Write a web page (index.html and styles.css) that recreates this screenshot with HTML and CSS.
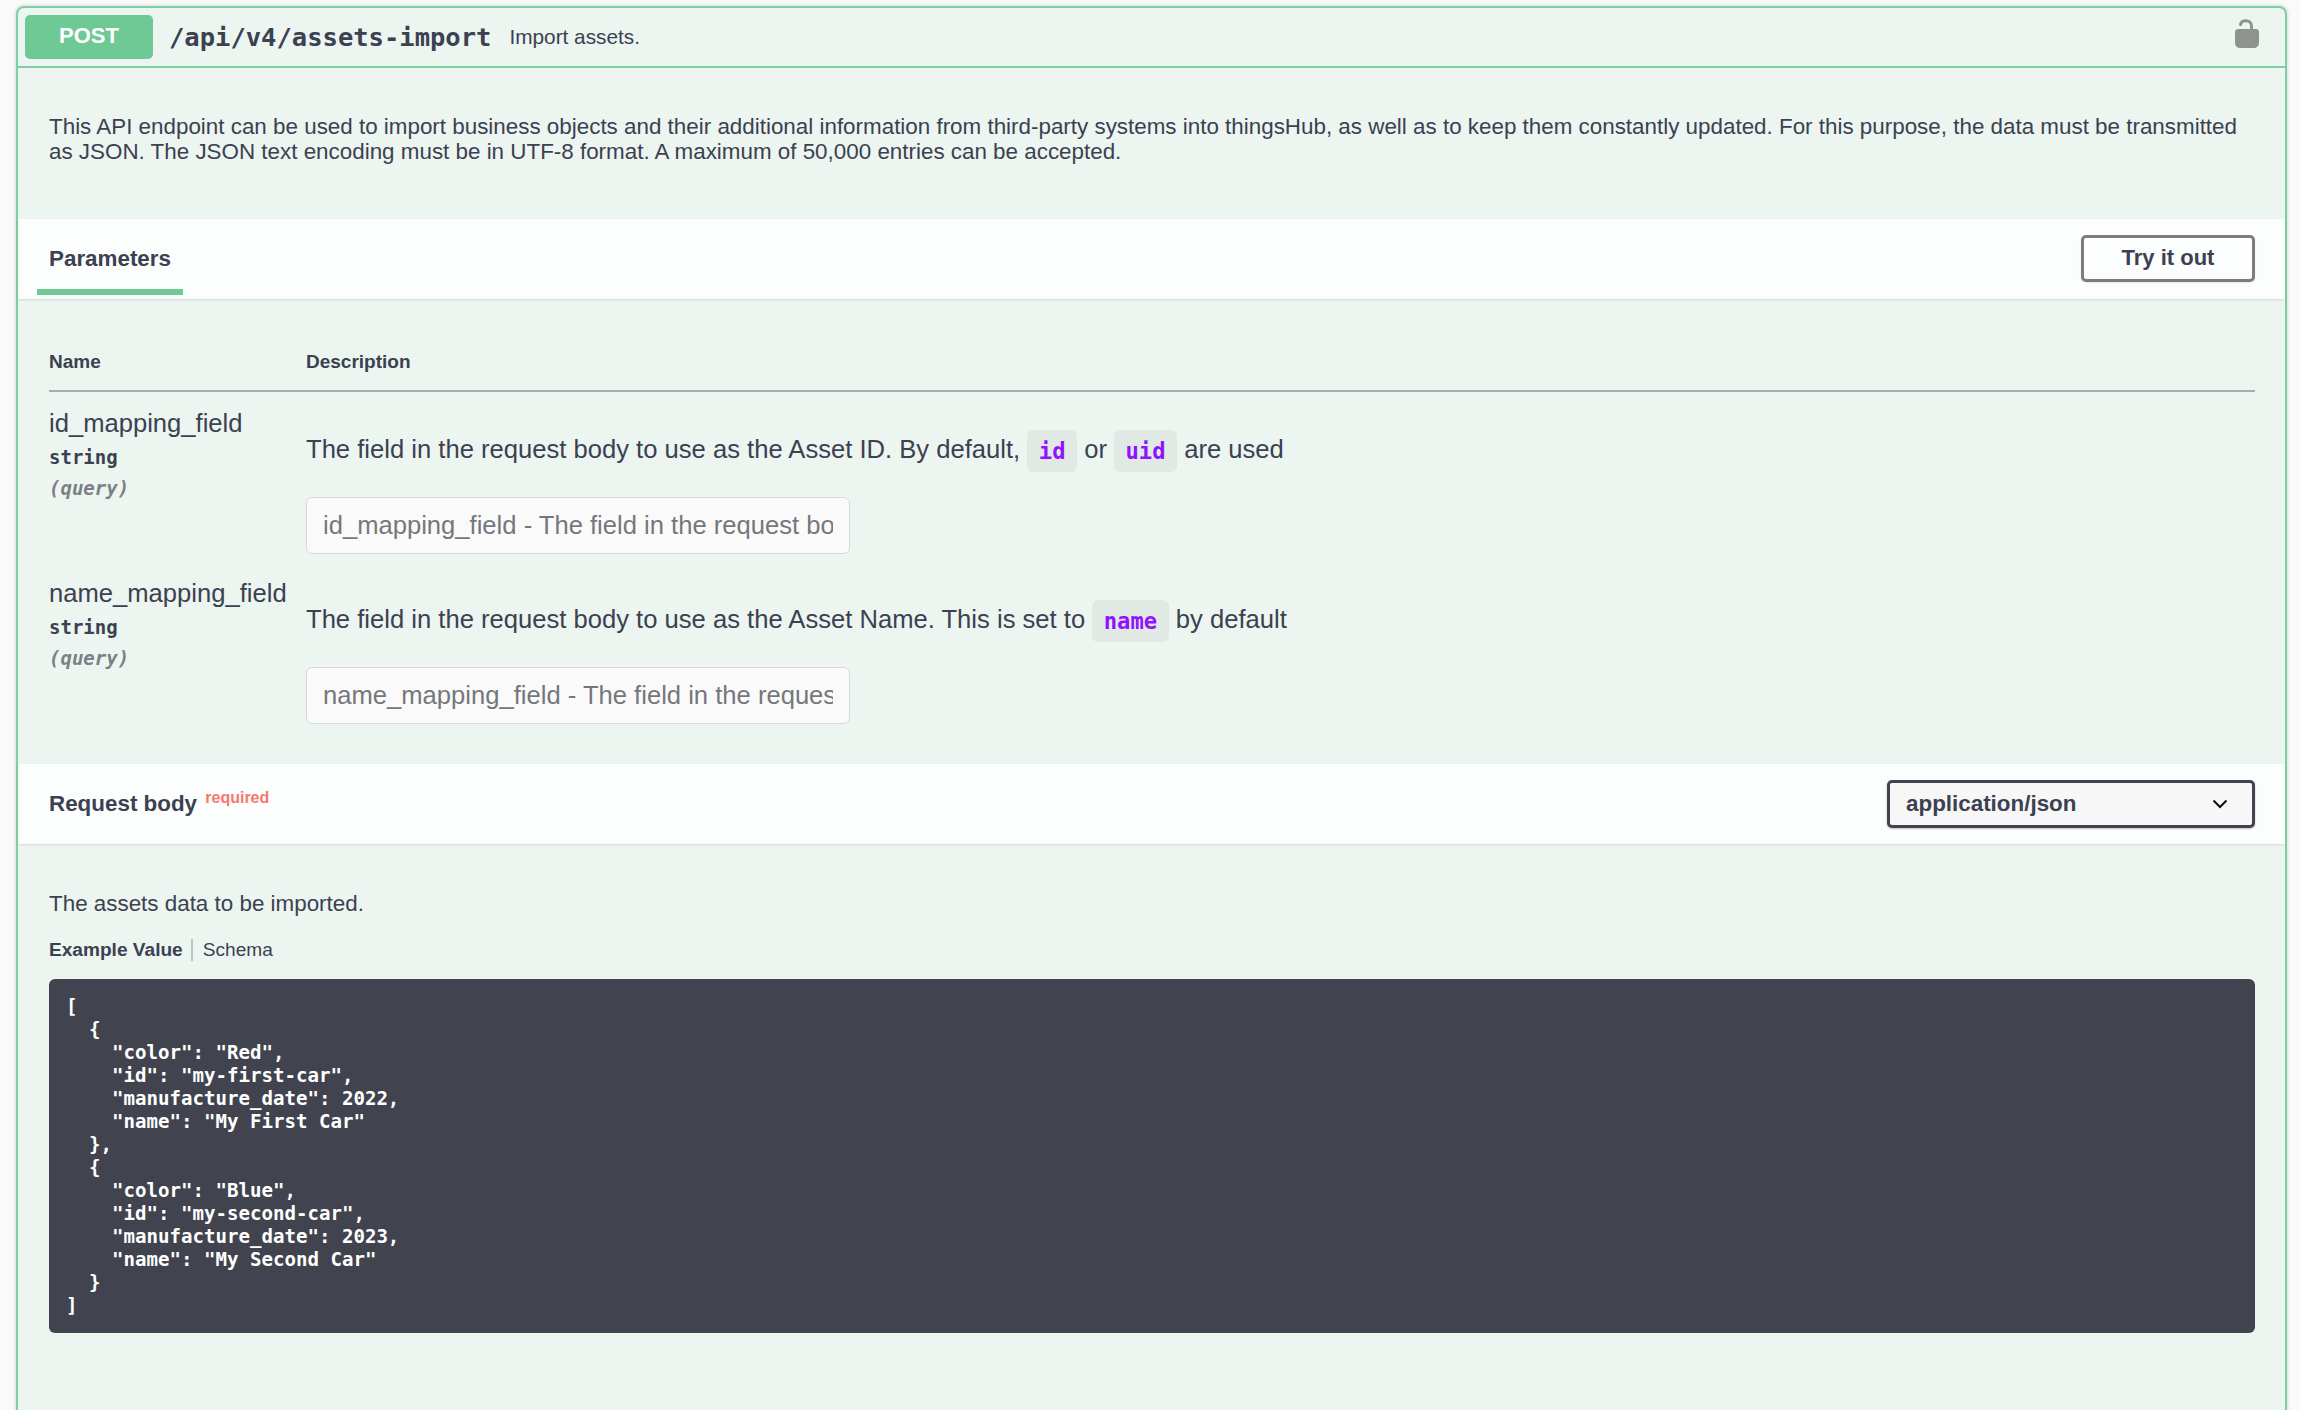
FILE: index.html
```html
<!DOCTYPE html>
<html lang="en">
<head>
<meta charset="utf-8">
<title>POST /api/v4/assets-import</title>
<link rel="stylesheet" href="styles.css">
</head>
<body>
<div class="opblock">
  <div class="summary">
    <span class="method">POST</span>
    <span class="path">/api/v4/assets-import</span>
    <span class="summary-desc">Import assets.</span>
    <svg class="lock" viewBox="0 0 24 29" width="24" height="29" aria-hidden="true"><path d="M5.500 5.500C5.800 3 8 1.700 11 1.700c3 0 5.500 1.800 5.500 5.300V12" fill="none" stroke="#8f938f" stroke-width="3" stroke-linecap="round"/><path d="M3 10h18c1.700 0 3 1.300 3 3v11c0 2.800-2.200 5-5 5H5c-2.800 0-5-2.200-5-5V13c0-1.700 1.300-3 3-3z" fill="#8f938f"/></svg>
  </div>
  <div class="description">
    <p>This API endpoint can be used to import business objects and their additional information from third-party systems into thingsHub, as well as to keep them constantly updated. For this purpose, the data must be transmitted as JSON. The JSON text encoding must be in UTF-8 format. A maximum of 50,000 entries can be accepted.</p>
  </div>
  <div class="section-header params-header">
    <span class="tab">Parameters</span>
    <button class="try-btn">Try it out</button>
  </div>
  <div class="params">
    <div class="param-head">
      <span class="col-name">Name</span>
      <span>Description</span>
    </div>
    <div class="param-row">
      <div class="col-name">
        <div class="pname">id_mapping_field</div>
        <div class="ptype">string</div>
        <div class="pin">(query)</div>
      </div>
      <div class="col-desc">
        <p class="pdesc">The field in the request body to use as the Asset ID. By default, <code>id</code> or <code>uid</code> are used</p>
        <input class="pinput" type="text" placeholder="id_mapping_field - The field in the request body to use as the Asset ID">
      </div>
    </div>
    <div class="param-row">
      <div class="col-name">
        <div class="pname">name_mapping_field</div>
        <div class="ptype">string</div>
        <div class="pin">(query)</div>
      </div>
      <div class="col-desc">
        <p class="pdesc">The field in the request body to use as the Asset Name. This is set to <code>name</code> by default</p>
        <input class="pinput" type="text" placeholder="name_mapping_field - The field in the request body to use as the Asset Name">
      </div>
    </div>
  </div>
  <div class="section-header body-header">
    <div class="body-title">Request body <sup class="required">required</sup></div>
    <div class="select">
      <span>application/json</span>
      <svg viewBox="0 0 16 10" width="16" height="10" aria-hidden="true"><path d="M1.500 1.500L8 8l6.500-6.500" fill="none" stroke="#111" stroke-width="2"/></svg>
    </div>
  </div>
  <div class="body-content">
    <p class="body-desc">The assets data to be imported.</p>
    <div class="example-tabs"><span class="tab-active">Example Value</span><span class="tab-other">Schema</span></div>
    <pre class="code">[
  {
    "color": "Red",
    "id": "my-first-car",
    "manufacture_date": 2022,
    "name": "My First Car"
  },
  {
    "color": "Blue",
    "id": "my-second-car",
    "manufacture_date": 2023,
    "name": "My Second Car"
  }
]</pre>
  </div>
</div>
</body>
</html>
```
FILE: styles.css
```css
html, body { margin: 0; padding: 0; height: 100%; overflow: hidden; background: #fafafa; }
body { font-family: "Liberation Sans", Arial, sans-serif; color: #3b4151; }
p { margin: 0; }

.opblock {
  margin: 6px 0 0 16px;
  width: 2271px;
  box-sizing: border-box;
  min-height: 1500px;
  background: #ecf5f0;
  border: 2px solid #7dd0a3;
  border-radius: 8px;
  box-shadow: 0 0 4px rgba(0,0,0,.18);
}

.summary {
  display: flex;
  align-items: center;
  height: 60px;
  box-sizing: border-box;
  padding: 0 26px 0 7px;
  border-bottom: 2px solid #7dd0a3;
}
.method {
  flex: none;
  width: 128px;
  height: 44px;
  border-radius: 5px;
  background: #6fc995;
  color: #fff;
  font-weight: 700;
  font-size: 22px;
  line-height: 42px;
  text-align: center;
}
.path {
  margin-left: 16px;
  font-family: "DejaVu Sans Mono", monospace;
  font-weight: 700;
  font-size: 25.500px;
}
.summary-desc { margin-left: 18px; font-size: 20.800px; flex: 1; }
.lock { display: block; margin-bottom: 7px; }

.description { height: 151px; box-sizing: border-box; padding: 46px 30px 0 31px; font-size: 22.400px; line-height: 25px; }

.section-header {
  display: flex;
  align-items: center;
  justify-content: space-between;
  box-sizing: border-box;
  height: 80px;
  background: #fcfdfd;
  padding: 0 30px 0 31px;
  box-shadow: 0 1px 2px rgba(0,0,0,.11);
}
.tab { font-weight: 700; font-size: 22.400px; border-bottom: 6px solid #6fc995; padding: 27px 12px 16px; margin-left: -12px; align-self: stretch; margin-bottom: 4px; }
.try-btn {
  width: 174px;
  height: 47px;
  margin-bottom: 1px;
  padding-bottom: 2px;
  background: transparent;
  border: 3px solid #7d7d7d;
  border-radius: 5px;
  font: 700 22px "Liberation Sans", Arial, sans-serif;
  color: #3b4151;
  box-shadow: 0 1px 2px rgba(0,0,0,.1);
}

.params { height: 465px; box-sizing: border-box; padding: 0 30px 0 31px; }
.param-head { display: flex; height: 93px; box-sizing: border-box; padding-top: 52px; border-bottom: 2px solid #a7aead; font-weight: 700; font-size: 19px; }
.col-name { width: 257px; flex: none; }
.param-row { display: flex; height: 170px; box-sizing: border-box; padding-top: 13px; }
.pname { font-size: 25.600px; line-height: 37px; }
.ptype { font: 700 19px/30px "DejaVu Sans Mono", monospace; }
.pin { font: italic 700 19px/32px "DejaVu Sans Mono", monospace; color: #7c7f85; }
.col-desc { display: flex; flex-direction: column; align-items: flex-start; }
.pdesc { margin-top: 25px; font-size: 25.600px; line-height: 30px; }
.pdesc code { display: inline-block; font: 700 22.200px/42px "DejaVu Sans Mono", monospace; color: #9012fe; background: #e1e9e5; border-radius: 6px; padding: 0 11.500px; vertical-align: middle; }
.pinput {
  margin-top: 25px;
  width: 544px;
  height: 57px;
  box-sizing: border-box;
  padding: 0 16px;
  background: #fafafa;
  border: 1px solid #d9d9d9;
  border-radius: 6px;
  font: 25.600px "Liberation Sans", Arial, sans-serif;
  outline: none;
}
.pinput::placeholder { color: #76777c; opacity: 1; }

.body-title { font-weight: 700; font-size: 22.400px; }
.required { color: #f6776c; font-size: 16px; font-weight: 700; position: relative; top: -8px; vertical-align: baseline; margin-left: 2px; line-height: 0; }
.select {
  display: flex;
  align-items: center;
  justify-content: space-between;
  box-sizing: border-box;
  width: 368px;
  height: 48px;
  padding: 0 24px 0 16px;
  background: #f7f7f7;
  border: 3px solid #41444e;
  border-radius: 5px;
  font-weight: 700;
  font-size: 22.400px;
  box-shadow: 0 1px 2px rgba(0,0,0,.25);
}

.body-content { padding: 47px 30px 0 31px; }
.body-desc { font-size: 22.400px; line-height: 25px; margin-bottom: 23px; }
.example-tabs { display: flex; align-items: center; font-size: 19.100px; line-height: 22px; }
.tab-active { font-weight: 700; padding-right: 8px; border-right: 2px solid #bfc4c2; }
.tab-other { padding-left: 10px; }
.code {
  margin: 18px 0 0;
  height: 354px;
  box-sizing: border-box;
  padding: 16px 17px;
  background: #41444e;
  border-radius: 6px;
  color: #fff;
  font: 700 19.100px/23px "DejaVu Sans Mono", monospace;
}
```
